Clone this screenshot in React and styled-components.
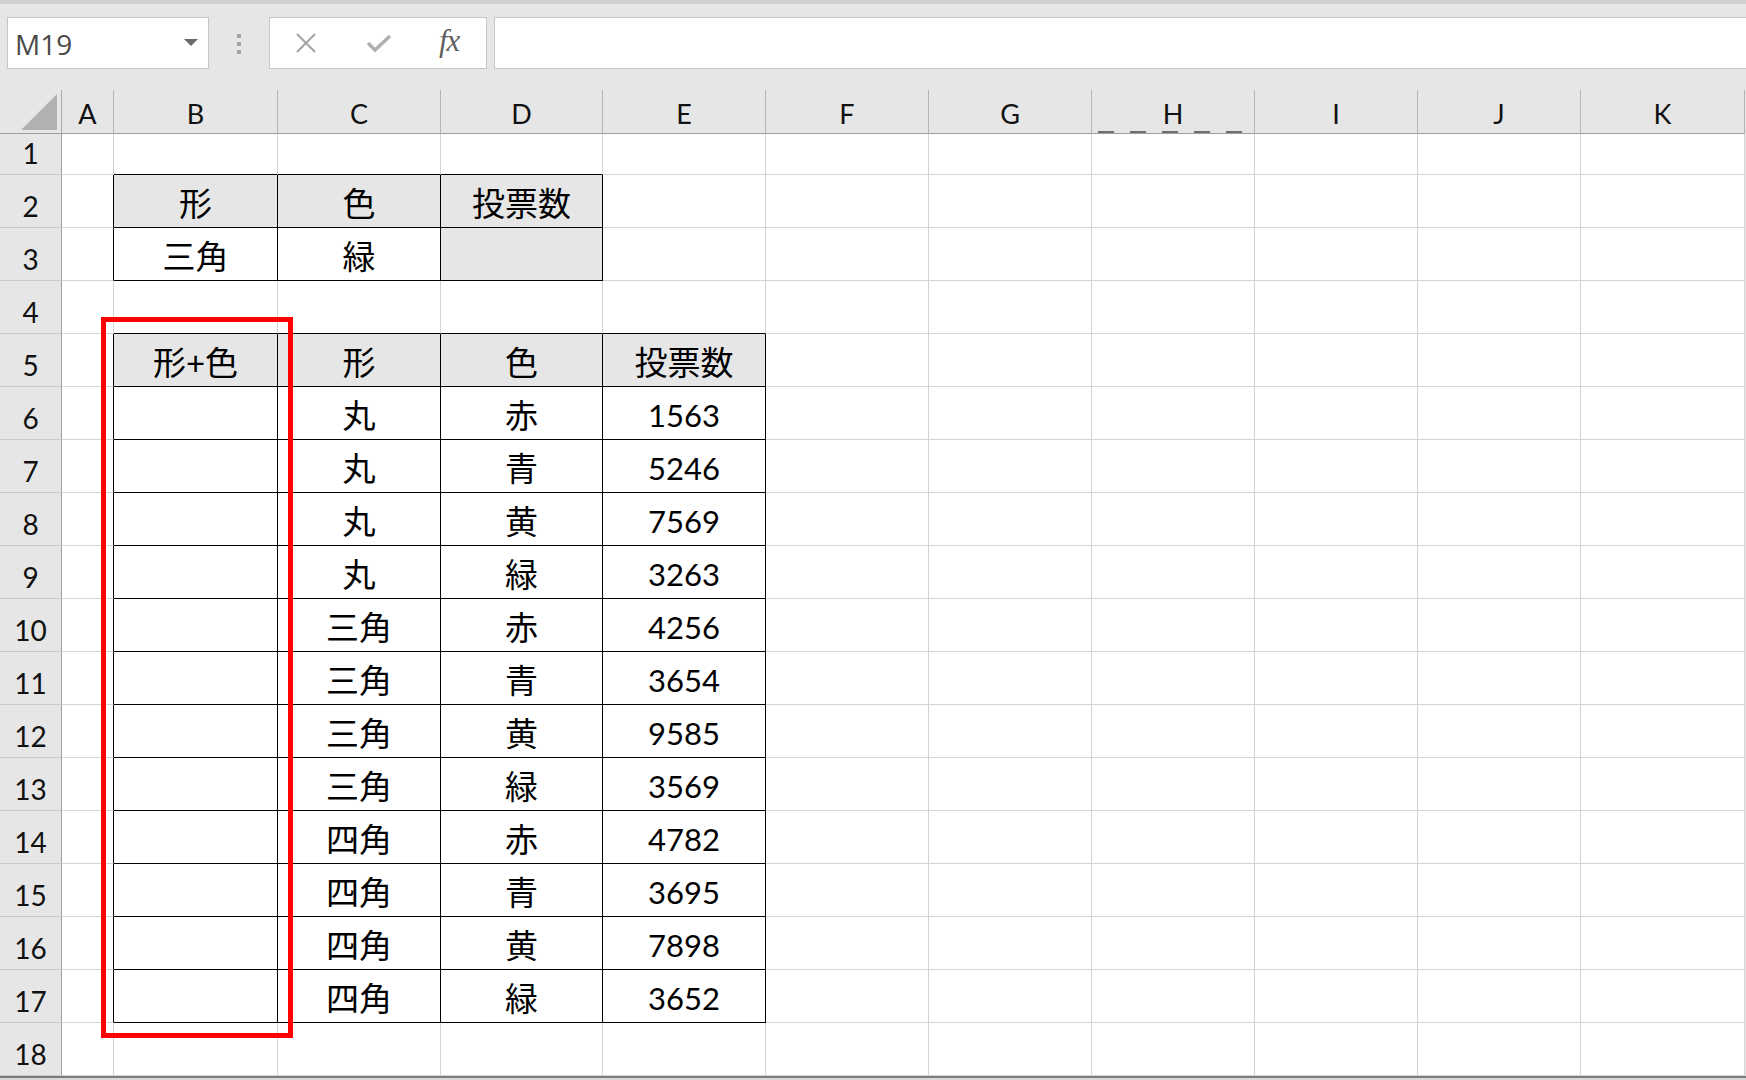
import React from "react";
import styled, { createGlobalStyle } from "styled-components";

const GlobalStyle = createGlobalStyle`
  html, body {
    margin: 0;
    padding: 0;
    background: #e6e6e6;
  }
  body {
    font-family: "Lato", "Noto Sans CJK JP", sans-serif;
  }
`;

const LETTERS = ["A", "B", "C", "D", "E", "F", "G", "H", "I", "J", "K"];
const WIDTHS = [52, 164, 163, 162, 163, 163, 163, 163, 163, 163, 164];

const TABLES = [
  { r1: 2, r2: 3, c1: 1, c2: 3 },
  { r1: 5, r2: 17, c1: 1, c2: 4 },
];

const inTable = (r, c) =>
  TABLES.some((t) => r >= t.r1 && r <= t.r2 && c >= t.c1 && c <= t.c2);

const shapes = ["丸", "丸", "丸", "丸", "三角", "三角", "三角", "三角", "四角", "四角", "四角", "四角"];
const colors = ["赤", "青", "黄", "緑"];
const votes = [1563, 5246, 7569, 3263, 4256, 3654, 9585, 3569, 4782, 3695, 7898, 3652];

const cellData = {
  "2-1": { text: "形", fill: true },
  "2-2": { text: "色", fill: true },
  "2-3": { text: "投票数", fill: true },
  "3-1": { text: "三角" },
  "3-2": { text: "緑" },
  "3-3": { text: "", fill: true },
  "5-1": { text: "形+色", fill: true },
  "5-2": { text: "形", fill: true },
  "5-3": { text: "色", fill: true },
  "5-4": { text: "投票数", fill: true },
};
shapes.forEach((s, i) => {
  const r = 6 + i;
  cellData[`${r}-2`] = { text: s };
  cellData[`${r}-3`] = { text: colors[i % 4] };
  cellData[`${r}-4`] = { text: String(votes[i]), num: true };
});

const Page = styled.div`
  width: 1746px;
  height: 1080px;
  overflow: hidden;
  display: flex;
  flex-direction: column;
  background: #e6e6e6;
`;

const TopStrip = styled.div`
  height: 4px;
  background: #d0d0d0;
  flex-shrink: 0;
`;

const FormulaBar = styled.div`
  height: 86px;
  flex-shrink: 0;
  display: flex;
  align-items: flex-start;
  padding: 13px 0 0 7px;
  box-sizing: border-box;
  background: #e6e6e6;
`;

const NameBox = styled.div`
  width: 202px;
  height: 52px;
  box-sizing: border-box;
  background: #fff;
  border: 1px solid #c6c6c6;
  display: flex;
  align-items: center;
  justify-content: space-between;
  padding: 2px 10px 0 7px;
  font-family: "Open Sans", sans-serif;
  font-size: 28px;
  color: #4a4a4a;
`;

const DropArrow = styled.span`
  width: 0;
  height: 0;
  border-left: 7px solid transparent;
  border-right: 7px solid transparent;
  border-top: 7px solid #6b6b6b;
  margin-bottom: 4px;
`;

const Grip = styled.div`
  width: 60px;
  height: 52px;
  display: flex;
  flex-direction: column;
  align-items: center;
  justify-content: center;
  gap: 4px;
  padding-top: 2px;
  box-sizing: border-box;

  span {
    width: 4px;
    height: 4px;
    background: #a3a3a3;
  }
`;

const ButtonBox = styled.div`
  width: 218px;
  height: 52px;
  box-sizing: border-box;
  background: #fff;
  border: 1px solid #c6c6c6;
  display: flex;
  align-items: center;
  padding-left: 25px;
`;

const IconSlot = styled.div`
  width: ${(p) => p.w}px;
  display: flex;
  align-items: center;
`;

const Fx = styled.span`
  font-family: "Liberation Serif", serif;
  font-style: italic;
  font-size: 31px;
  color: #5f5f5f;
  letter-spacing: -1px;
  margin-bottom: 4px;
`;

const FormulaInput = styled.div`
  flex: 1;
  height: 52px;
  margin-left: 7px;
  margin-right: -4px;
  box-sizing: border-box;
  background: #fff;
  border: 1px solid #c6c6c6;
`;

const Sheet = styled.div`
  position: relative;
  display: grid;
  grid-template-columns: 62px ${WIDTHS.map((w) => `${w}px`).join(" ")};
  grid-template-rows: 44px 41px repeat(17, 53px);
  flex-shrink: 0;
`;

const Corner = styled.div`
  background: #e6e6e6;
  border-right: 1px solid #ababab;
  border-bottom: 1px solid #9e9e9e;
  box-sizing: border-box;
  display: flex;
  align-items: flex-end;
  justify-content: flex-end;
  padding: 0 4px 3px 0;

  span {
    width: 36px;
    height: 36px;
    background: #b1b1b1;
    clip-path: polygon(100% 0, 100% 100%, 0 100%);
  }
`;

const ColHead = styled.div`
  background: #e6e6e6;
  border-right: 1px solid #b5b5b5;
  border-bottom: 1px solid #9e9e9e;
  box-sizing: border-box;
  display: flex;
  align-items: center;
  justify-content: center;
  padding-top: 4px;
  font-size: 27px;
  color: #111;
  ${(p) =>
    p.marked &&
    `
    background-image: repeating-linear-gradient(90deg, #6f6f6f 0 16px, transparent 16px 32px);
    background-size: 100% 2px;
    background-position: 6px 100%;
    background-repeat: no-repeat;
  `}
`;

const RowHead = styled.div`
  background: #e6e6e6;
  border-right: 1px solid #a3a3a3;
  border-bottom: 1px solid #cbcbcb;
  box-sizing: border-box;
  display: flex;
  align-items: flex-end;
  justify-content: center;
  padding-bottom: 3px;
  font-size: 28px;
  line-height: 1.2;
  color: #111;
`;

const Cell = styled.div`
  background: ${(p) => (p.fill ? "#e7e6e6" : "#fff")};
  border-right: 1px solid ${(p) => (p.edgeRight ? "#000" : "#d4d4d4")};
  border-bottom: 1px solid ${(p) => (p.edgeBottom ? "#000" : "#d4d4d4")};
  box-sizing: border-box;
  display: flex;
  align-items: center;
  justify-content: center;
  padding-top: ${(p) => (p.num ? 4 : 2)}px;
  font-size: ${(p) => (p.num ? 31 : 33)}px;
  color: #000;
  white-space: nowrap;
`;

const Highlight = styled.div`
  position: absolute;
  left: 101px;
  top: 227px;
  width: 192px;
  height: 721px;
  box-sizing: border-box;
  border: 5px solid #ff0000;
  pointer-events: none;
`;

const BottomEdge = styled.div`
  flex: 1;
  border-top: 2px solid #7c7c7c;
  background: #d8d8d8;
`;

const CrossIcon = () => (
  <svg width="22" height="20" viewBox="0 0 22 20">
    <path d="M2 1 L20 19 M20 1 L2 19" stroke="#a3a3a3" strokeWidth="2" fill="none" />
  </svg>
);

const CheckIcon = () => (
  <svg width="26" height="20" viewBox="0 0 26 20">
    <path d="M2 10 L9 17 L24 3" stroke="#b0b0b0" strokeWidth="3.5" fill="none" />
  </svg>
);

export default function App() {
  const rows = [];
  for (let r = 1; r <= 18; r++) {
    rows.push(<RowHead key={`rh${r}`}>{r}</RowHead>);
    for (let c = 0; c < LETTERS.length; c++) {
      const d = cellData[`${r}-${c}`] || {};
      rows.push(
        <Cell
          key={`${r}-${c}`}
          fill={d.fill ? 1 : 0}
          num={d.num ? 1 : 0}
          edgeRight={inTable(r, c) || inTable(r, c + 1) ? 1 : 0}
          edgeBottom={inTable(r, c) || inTable(r + 1, c) ? 1 : 0}
        >
          {d.text}
        </Cell>
      );
    }
  }

  return (
    <Page>
      <GlobalStyle />
      <TopStrip />
      <FormulaBar>
        <NameBox>
          M19
          <DropArrow />
        </NameBox>
        <Grip>
          <span />
          <span />
          <span />
        </Grip>
        <ButtonBox>
          <IconSlot w={71}>
            <CrossIcon />
          </IconSlot>
          <IconSlot w={73}>
            <CheckIcon />
          </IconSlot>
          <IconSlot w={30}>
            <Fx>fx</Fx>
          </IconSlot>
        </ButtonBox>
        <FormulaInput />
      </FormulaBar>
      <Sheet>
        <Corner>
          <span />
        </Corner>
        {LETTERS.map((l) => (
          <ColHead key={l} marked={l === "H" ? 1 : 0}>
            {l}
          </ColHead>
        ))}
        {rows}
        <Highlight />
      </Sheet>
      <BottomEdge />
    </Page>
  );
}
